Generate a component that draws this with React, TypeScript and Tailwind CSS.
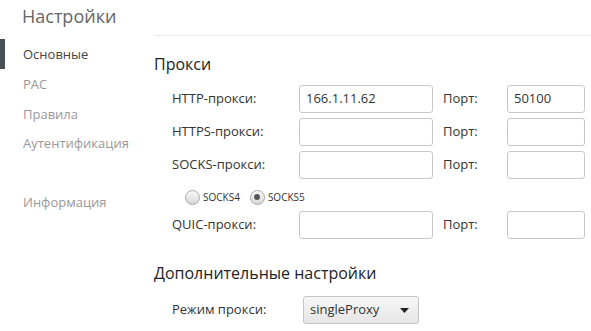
import React from "react";

const font = { fontFamily: '"Open Sans", "Noto Sans", sans-serif' };

function Row({ label, value, port, top }: { label: string; value?: string; port?: string; top: string }) {
  return (
    <div className={`flex items-center h-[28px] ${top}`}>
      <div className="w-[145px] pl-[18px] text-[13px] text-[#333]">{label}</div>
      <div className="w-[134px] h-[28px] border border-[#c8c8c8] rounded-[3px] px-[6px] flex items-center text-[13px] text-[#333]">
        {value}
      </div>
      <div className="w-[74px] pl-[10px] text-[13px] text-[#333]">Порт:</div>
      <div className="w-[78px] h-[28px] border border-[#c8c8c8] rounded-[3px] px-[6px] flex items-center text-[13px] text-[#333]">
        {port}
      </div>
    </div>
  );
}

function Radio({ checked }: { checked?: boolean }) {
  return (
    <span className="w-[15px] h-[15px] rounded-full border border-[#a8a8a8] bg-gradient-to-b from-[#fafafa] to-[#d8d8d8] flex items-center justify-center">
      {checked && <span className="w-[6px] h-[6px] rounded-full bg-[#555]" />}
    </span>
  );
}

export default function App() {
  return (
    <div className="w-[591px] h-[331px] bg-white flex overflow-hidden" style={font}>
      <div className="w-[154px] shrink-0">
        <div className="pl-[22px] pt-[3px] h-[39px] text-[18px] text-[#666]">Настройки</div>
        <div className="flex flex-col">
          <div className="h-[30px] flex items-center pt-[2px] border-l-[5px] border-[#4b4f56] pl-[18px] text-[13px] text-[#444]">Основные</div>
          <div className="h-[30px] flex items-center pt-[2px] pl-[23px] text-[13px] text-[#999]">PAC</div>
          <div className="h-[29px] flex items-center pt-[3px] pl-[23px] text-[13px] text-[#999]">Правила</div>
          <div className="h-[28px] flex items-center pt-[3px] pl-[23px] text-[13px] text-[#999]">Аутентификация</div>
          <div className="h-[57px] flex items-end pb-[1px] pl-[23px] text-[13px] text-[#999]">Информация</div>
        </div>
      </div>
      <div className="flex-1 mt-[35px] border-t border-[#ebebeb]">
        <div className="mt-[16px] h-[24px] flex items-center text-[16px] text-[#222]">Прокси</div>
        <Row label="HTTP-прокси:" value="166.1.11.62" port="50100" top="mt-[9px]" />
        <Row label="HTTPS-прокси:" top="mt-[5px]" />
        <Row label="SOCKS-прокси:" top="mt-[5px]" />
        <div className="flex items-center pl-[31px] mt-[5px] h-[26px] text-[10px] text-[#333]">
          <Radio />
          <span className="ml-[3px] mr-[10px]">SOCKS4</span>
          <Radio checked />
          <span className="ml-[3px]">SOCKS5</span>
        </div>
        <Row label="QUIC-прокси:" top="mt-[1px]" />
        <div className="mt-[22px] h-[24px] flex items-center text-[16px] text-[#222]">Дополнительные настройки</div>
        <div className="flex items-center mt-[11px] h-[28px]">
          <div className="w-[149px] pl-[18px] text-[13px] text-[#333]">Режим прокси:</div>
          <div className="w-[116px] h-[28px] border border-[#c4c4c4] rounded-[3px] bg-gradient-to-b from-[#f6f6f6] to-[#e6e6e6] flex items-center justify-between pl-[6px] pr-[9px] text-[13px] text-[#333]">
            <span>singleProxy</span>
            <svg width="9" height="5" viewBox="0 0 9 5"><path d="M0 0h9L4.5 5z" fill="#222" /></svg>
          </div>
        </div>
      </div>
    </div>
  );
}
